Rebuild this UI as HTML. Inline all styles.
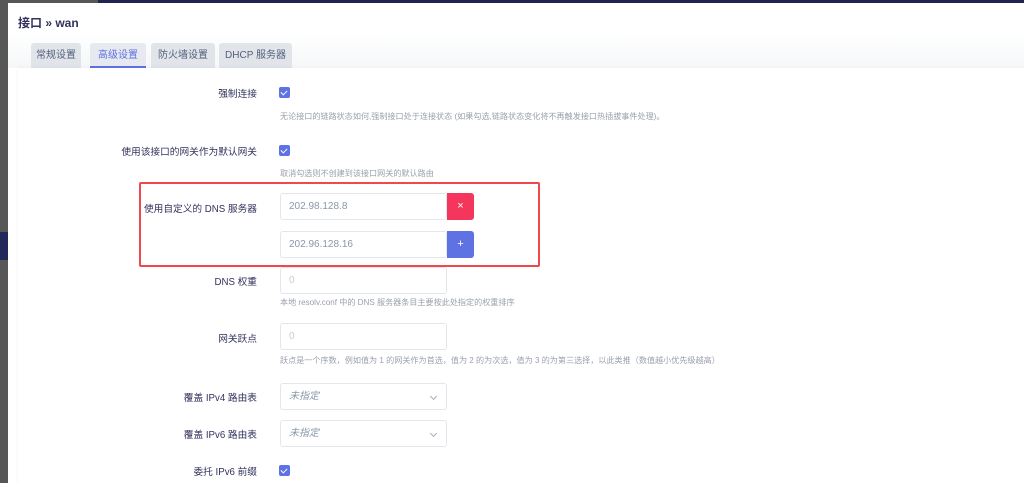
<!DOCTYPE html>
<html><head><meta charset="utf-8"><style>
*{margin:0;padding:0;box-sizing:border-box}
body{width:1024px;height:483px;overflow:hidden;background:#575757;position:relative;font-family:"Liberation Sans","Noto Sans CJK SC",sans-serif;color:#32325d}
.top{position:absolute;left:98px;top:0;right:0;height:4px;background:#1f2550}
.side{position:absolute;left:0;top:232px;width:8px;height:28px;background:#22295a}
.modal{position:absolute;left:8px;top:3px;right:0;bottom:0;background:#fff}
.title{position:absolute;left:10px;top:11px;font-size:12px;font-weight:bold;color:#32325d}
.tabbar{position:absolute;left:0;right:0;top:30px;height:35px;background:linear-gradient(#fff,#f5f7f8)}
.tab{position:absolute;top:10px;height:25px;background:#e1e5ea;border-radius:3px 3px 0 0;font-size:10px;color:#525f7f;text-align:center;line-height:25px}
.tab.act{color:#5e72e4;border-bottom:2px solid #5e72e4;background:#e6e9ef}
.panel{position:absolute;background:#fff;box-shadow:0 0 4px rgba(0,0,0,.05)}
.lbl{position:absolute;right:767px;font-size:9.7px;color:#32325d;white-space:nowrap;text-align:right}
.cb{position:absolute;left:279px;width:11px;height:11px;background:#5e72e4;border-radius:2px}
.cb:after{content:"";position:absolute;left:3px;top:1.5px;width:3px;height:5px;border:solid #fff;border-width:0 1.5px 1.5px 0;transform:rotate(45deg)}
.desc{position:absolute;left:280px;font-size:8.1px;color:#9aa0ac;white-space:nowrap}
.inp{position:absolute;left:280px;width:167px;height:27px;border:1px solid #e3e6ea;border-radius:3px;font-size:10px;color:#8898aa;padding-left:8px;line-height:25px}
.btn{position:absolute;left:447px;width:27px;height:27px;border-radius:0 3px 3px 0;color:#fff;font-size:11px;text-align:center;line-height:26px}
.sel{font-style:italic;color:#8898aa}
.sel:after{content:"";position:absolute;right:10px;top:10px;width:4px;height:4px;border:solid #aab;border-width:0 1px 1px 0;transform:rotate(45deg)}
.red{position:absolute;left:139px;top:182px;width:401px;height:85px;border:2px solid #f0484c;border-radius:2px}
</style></head><body>
<div class="top"></div><div class="side"></div>
<div class="modal">
<div class="title">接口 » wan</div>
<div class="tabbar">
<div class="tab" style="left:23px;width:50px">常规设置</div>
<div class="tab act" style="left:82px;width:56px">高级设置</div>
<div class="tab" style="left:143px;width:64px">防火墙设置</div>
<div class="tab" style="left:211px;width:73px">DHCP 服务器</div>
</div>
</div>
<div class="panel" style="left:18px;top:68px;right:0;bottom:0"></div>
<div class="lbl" style="top:86px">强制连接</div>
<div class="cb" style="top:87px"></div>
<div class="desc" style="top:111px">无论接口的链路状态如何,强制接口处于连接状态 (如果勾选,链路状态变化将不再触发接口热插拔事件处理)。</div>
<div class="lbl" style="top:144px">使用该接口的网关作为默认网关</div>
<div class="cb" style="top:145px"></div>
<div class="desc" style="top:168px">取消勾选则不创建到该接口网关的默认路由</div>
<div class="lbl" style="top:201px">使用自定义的 DNS 服务器</div>
<div class="inp" style="top:193px">202.98.128.8</div><div class="btn" style="top:193px;background:#f5365c">×</div>
<div class="inp" style="top:231px">202.96.128.16</div><div class="btn" style="top:231px;background:#5e72e4">+</div>
<div class="red"></div>
<div class="lbl" style="top:274px">DNS 权重</div>
<div class="inp" style="top:267px;color:#ccc">0</div>
<div class="desc" style="top:297px">本地 resolv.conf 中的 DNS 服务器条目主要按此处指定的权重排序</div>
<div class="lbl" style="top:331px">网关跃点</div>
<div class="inp" style="top:323px;color:#ccc">0</div>
<div class="desc" style="top:355px">跃点是一个序数，例如值为 1 的网关作为首选，值为 2 的为次选，值为 3 的为第三选择，以此类推（数值越小优先级越高）</div>
<div class="lbl" style="top:390px">覆盖 IPv4 路由表</div>
<div class="inp sel" style="top:383px">未指定</div>
<div class="lbl" style="top:427px">覆盖 IPv6 路由表</div>
<div class="inp sel" style="top:420px">未指定</div>
<div class="lbl" style="top:464px">委托 IPv6 前缀</div>
<div class="cb" style="top:465px"></div>
</body></html>
